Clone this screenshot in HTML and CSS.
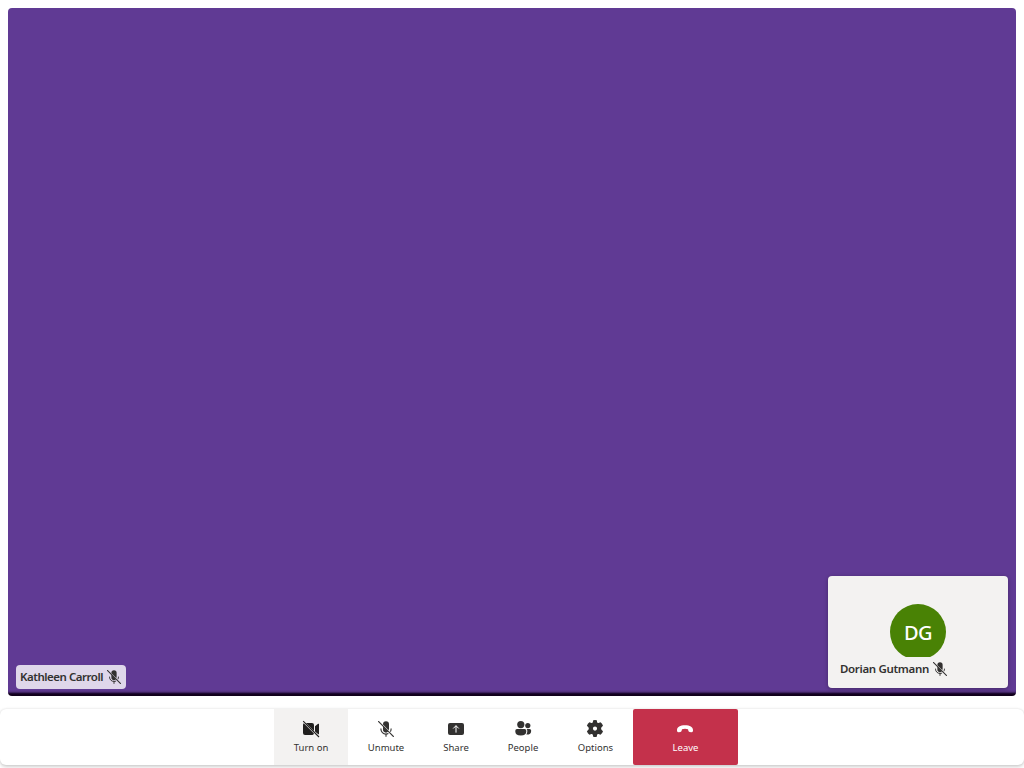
FILE: index.html
```html
<!DOCTYPE html>
<html lang="en">
<head>
<meta charset="utf-8">
<title>Call</title>
<link rel="stylesheet" href="styles.css">
</head>
<body>
<svg class="defs" aria-hidden="true">
  <symbol id="mic-off" viewBox="0 0 16 16">
    <path d="M5 3.6V3.2a3 3 0 0 1 6 0v4.6q0 .9-.4 1.4zM5 5.4l5.2 5.2A3 3 0 0 1 5 8z"/>
    <path d="M2.9 7.6v.5A5 5 0 0 0 8 13.1q1.3 0 2.4-.5M13.1 7.6v.5q0 1.3-.7 2.5M8 13.1v2.7" fill="none" stroke="currentColor" stroke-width="1.1"/>
    <path d="M.2.2l15.6 15.6" fill="none" stroke="currentColor" stroke-width="1.2"/>
  </symbol>
</svg>
<div class="app">
  <main class="stage">
    <div class="name-tag name-tag-main"><span class="name">Kathleen Carroll</span><svg class="mic"><use href="#mic-off"/></svg></div>
    <section class="self-tile">
      <div class="avatar">DG</div>
      <div class="name-tag name-tag-self"><span class="name">Dorian Gutmann</span><svg class="mic"><use href="#mic-off"/></svg></div>
    </section>
  </main>
  <nav class="bar">
    <button class="control camera"><svg class="icon" viewBox="0 0 18 18"><path d="M4 3H10a2 2 0 0 1 2 2v6zM1.8 3.2L12 13.4q-.6 1.6-2 1.6H3a2 2 0 0 1-2-2V5q0-1.4.8-1.8zM13 6.2l3.1-2.4q.9-.5.9.5v9.4q0 .8-.7.5L13 11.5z"/><path d="M1.2 1.2l15.8 15.8" fill="none" stroke="currentColor" stroke-width="1.1"/></svg><span>Turn on</span></button>
    <button class="control unmute"><svg class="icon" viewBox="-1 -1 18 18"><use href="#mic-off" width="16" height="16"/></svg><span>Unmute</span></button>
    <button class="control share"><svg class="icon" viewBox="0 0 18 18"><rect x="1" y="3" width="16" height="12" rx="2"/><path d="M9 12.6V5.7M6.2 8.5L9 5.7l2.8 2.8" fill="none" stroke="#fff" stroke-width="1"/></svg><span>Share</span></button>
    <button class="control people"><svg class="icon" viewBox="0 0 18 18"><circle cx="6.8" cy="4.6" r="3.6"/><circle cx="13.8" cy="5.6" r="2.6"/><path d="M3 9h7.6a1.7 1.7 0 0 1 1.7 1.7v.8q0 4-5.5 4t-5.5-4v-.8A1.7 1.7 0 0 1 3 9zM12.5 9h3.1a1.7 1.7 0 0 1 1.6 1.7q0 4.1-4.9 3.9 1-1.4 1-3.1v-.8q0-1-.8-1.7z"/></svg><span>People</span></button>
    <button class="control options"><svg class="icon" viewBox="0 0 18 18"><path fill-rule="evenodd" d="M7.2.3q1.8-.4 3.6 0l.3 2q.4.9 1.4.6l2-.7q1.8 1.4 2.5 3.5l-1.5 1.5q-.8 1.3 0 2.5l1.5 1.6q-.7 2.4-2.5 3.5l-2-.7q-1-.3-1.4.7l-.3 2q-1.8.5-3.6 0l-.4-2q-.4-1-1.4-.7l-2 .7q-1.8-1.4-2.5-3.5l1.5-1.6q.8-1.2 0-2.5L.9 5.7q.7-2.2 2.5-3.5l2 .7q1 .3 1.4-.6zM9 6.5a2.1 2.1 0 1 0 0 4.2 2.1 2.1 0 0 0 0-4.2z"/></svg><span>Options</span></button>
    <button class="control leave"><svg class="icon" viewBox="0 0 18 18"><path d="M9 5.2c4.9 0 8 1.9 8 4.7v.8q-.2 1.6-1.8 1.5l-1.6-.3q-1.1-.2-1.3-1.3l-.3-1.3Q9 8.3 6 9.3l-.3 1.3q-.2 1.1-1.3 1.3l-1.6.3Q1.2 12.3 1 10.7v-.8C1 7.1 4.1 5.2 9 5.2z"/></svg><span>Leave</span></button>
  </nav>
</div>
</body>
</html>
```
FILE: styles.css
```css
* { box-sizing: border-box; }
body { margin: 0; background: #fff; color: #323130; font-family: "Noto Sans", "Open Sans", sans-serif; }
.defs { position: absolute; width: 0; height: 0; }
svg { fill: currentColor; display: block; }
.app { height: 768px; display: flex; flex-direction: column; overflow: hidden; }
.stage {
  height: 688px;
  flex: none;
  margin: 8px 8px 13px;
  padding: 8px;
  display: flex;
  align-items: flex-end;
  justify-content: space-between;
  border-radius: 4px;
  background: linear-gradient(to bottom, #603a94 0, #603a94 682px, #51317a 684px, #2a1244 685px, #12001f 686px, #100019 688px);
}
.name-tag { display: flex; align-items: center; gap: 4px; height: 24px; padding: 0 4px; border-radius: 4px; font-size: 11.5px; font-weight: 600; white-space: nowrap; }
.name-tag-main { width: 110px; margin-bottom: -1px; background: rgba(255, 255, 255, .8); letter-spacing: -.48px; }
.name { padding-bottom: 1px; }
.name-tag-main .name { width: 83px; }
.mic { width: 14px; height: 14px; flex: none; }
.self-tile { width: 180px; height: 112px; padding: 28px 8px 7px; display: flex; flex-direction: column; border-radius: 4px; background: #f3f2f1; box-shadow: 0 1px 4px rgba(0, 0, 0, .3); }
.avatar { width: 56px; height: 56px; flex: none; align-self: center; display: grid; place-items: center; border-radius: 50%; background: #498205; color: #fff; font-size: 20px; font-weight: 500; line-height: 58px; letter-spacing: -.5px; }
.name-tag-self { position: relative; margin-top: -3px; background: #f3f2f1; letter-spacing: -.33px; }
.name-tag-self .name { width: 89px; }
.bar { height: 56px; flex: none; padding-left: 274px; display: flex; border-radius: 6px; background: #fff; box-shadow: 0 1.6px 3.6px rgba(0, 0, 0, .18), 0 0 2px rgba(0, 0, 0, .08); }
.control { height: 56px; padding: 11px 0 0; border: 0; display: flex; flex-direction: column; align-items: center; background: transparent; color: #323130; font: 9.5px/14px "Noto Sans", "Open Sans", sans-serif; white-space: nowrap; }
.control span { margin-top: 3px; }
.icon { width: 18px; height: 18px; flex: none; }
.camera { width: 74px; background: #f3f2f1; }
.camera .icon { color: #201f1e; }
.unmute { width: 76px; }
.share { width: 64px; }
.people { width: 70px; }
.options { width: 75px; }
.options .icon, .leave .icon { margin-left: -1px; }
.leave { width: 105px; border-radius: 2px; background: #c4314b; color: #fff; }
```
